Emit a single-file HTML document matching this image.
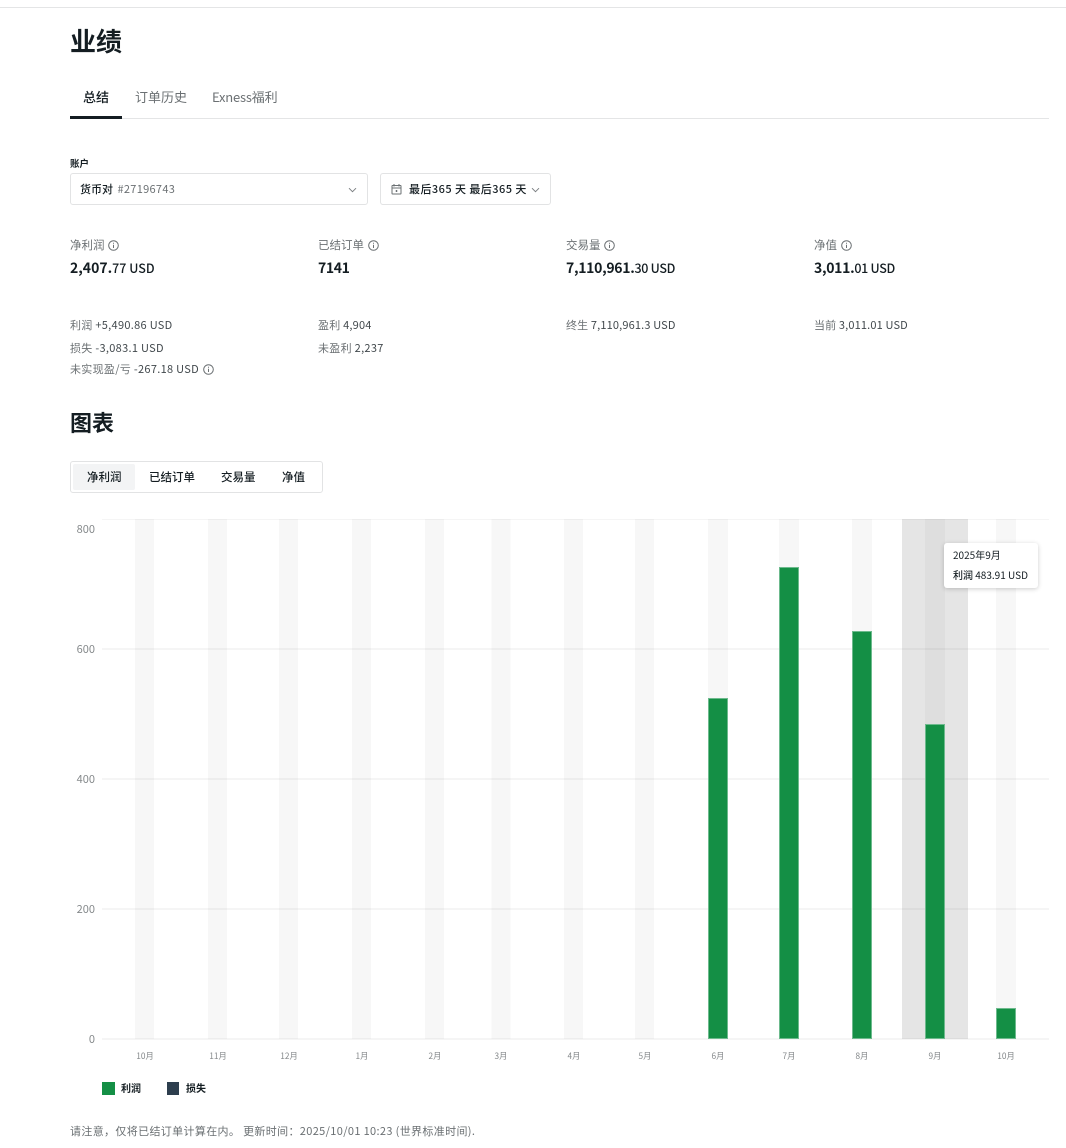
<!DOCTYPE html>
<html lang="zh"><head><meta charset="utf-8">
<style>
html,body{margin:0;padding:0;background:#fff}
body{width:1066px;height:1148px;position:relative;overflow:hidden;font-family:"Noto Sans CJK SC","Liberation Sans",sans-serif;color:#141d22}
.a{position:absolute;white-space:nowrap;line-height:1}
.g{color:#6b7073}
.box{position:absolute;border:1px solid #e2e3e4;border-radius:3px;box-sizing:border-box;background:#fff}
.s{font-size:11px;line-height:14px;letter-spacing:.3px;color:#42494d}
.l{font-size:11.5px;line-height:14px}
.v{font-size:14px;font-weight:600;line-height:18px}
.v span{font-size:12.5px;font-weight:500}
.t{font-size:11.500px;font-weight:500;line-height:14px}
svg{position:absolute;overflow:visible}
</style></head><body>
<div class="a" style="left:0;top:7px;width:1066px;height:1px;background:#e4e5e6"></div>
<div class="a" style="left:70px;top:27px;font-size:26px;font-weight:700;line-height:28px">业绩</div>
<div class="a" style="left:83px;top:89px;font-size:13px;font-weight:500;line-height:16px">总结</div>
<div class="a g" style="left:135px;top:89px;font-size:13px;line-height:16px">订单历史</div>
<div class="a g" style="left:212px;top:89px;font-size:13px;line-height:16px;letter-spacing:-.2px">Exness福利</div>
<div class="a" style="left:70px;top:118px;width:979px;height:1px;background:#e4e5e6"></div>
<div class="a" style="left:70px;top:116px;width:52px;height:3px;background:#141d22"></div>

<div class="a" style="left:70px;top:158px;font-size:9.500px;font-weight:700;line-height:11px">账户</div>
<div class="box" style="left:70px;top:173px;width:298px;height:32px"></div>
<div class="a" style="left:80px;top:182px;font-size:11px;font-weight:500;line-height:14px">货币对 <span class="g" style="font-weight:400;letter-spacing:.3px;margin-left:2px">#27196743</span></div>
<svg style="left:347px;top:186px" width="11" height="8" viewBox="0 0 11 8"><path d="M2 2.200 5.500 5.700 9 2.200" fill="none" stroke="#7b7f82" stroke-width="1"/></svg>
<div class="box" style="left:380px;top:173px;width:171px;height:32px"></div>
<svg style="left:391px;top:183px" width="11" height="12" viewBox="0 0 11 12"><path d="M1.500 2.500h8a.5.5 0 0 1 .5.5v7.500a.5.5 0 0 1-.5.5h-8a.5.5 0 0 1-.5-.5V3a.5.5 0 0 1 .5-.5zM1 5h9M3 1v2.500M8 1v2.500M4.500 8h2M5.500 7v2" fill="none" stroke="#6b7073" stroke-width="1"/></svg>
<div class="a" style="left:409px;top:182px;font-size:11px;font-weight:500;line-height:14px;letter-spacing:.45px">最后365 天 最后365 天</div>
<svg style="left:530px;top:186px" width="11" height="8" viewBox="0 0 11 8"><path d="M2 2.200 5.500 5.700 9 2.200" fill="none" stroke="#7b7f82" stroke-width="1"/></svg>

<div class="a g l" style="left:70px;top:238px">净利润</div>
<svg style="left:108px;top:240px" width="11" height="11" viewBox="0 0 11 11"><circle cx="5.500" cy="5.500" r="4.800" fill="none" stroke="#6b7073"/><path d="M5.500 4.800v3.200M5.500 2.800v1" stroke="#6b7073"/></svg>
<div class="a v" style="left:70px;top:259px">2,407.<span>77 USD</span></div>
<div class="a g l" style="left:318px;top:238px">已结订单</div>
<svg style="left:368px;top:240px" width="11" height="11" viewBox="0 0 11 11"><circle cx="5.500" cy="5.500" r="4.800" fill="none" stroke="#6b7073"/><path d="M5.500 4.800v3.200M5.500 2.800v1" stroke="#6b7073"/></svg>
<div class="a v" style="left:318px;top:259px;letter-spacing:-.4px">7141</div>
<div class="a g l" style="left:566px;top:238px">交易量</div>
<svg style="left:604px;top:240px" width="11" height="11" viewBox="0 0 11 11"><circle cx="5.500" cy="5.500" r="4.800" fill="none" stroke="#6b7073"/><path d="M5.500 4.800v3.200M5.500 2.800v1" stroke="#6b7073"/></svg>
<div class="a v" style="left:566px;top:259px;letter-spacing:-.3px">7,110,961.<span>30 USD</span></div>
<div class="a g l" style="left:814px;top:238px">净值</div>
<svg style="left:841px;top:240px" width="11" height="11" viewBox="0 0 11 11"><circle cx="5.500" cy="5.500" r="4.800" fill="none" stroke="#6b7073"/><path d="M5.500 4.800v3.200M5.500 2.800v1" stroke="#6b7073"/></svg>
<div class="a v" style="left:814px;top:259px;letter-spacing:-.3px">3,011.<span>01 USD</span></div>

<div class="a s" style="left:70px;top:318px"><span class="g">利润</span> +5,490.86 USD</div>
<div class="a s" style="left:70px;top:341px"><span class="g">损失</span> -3,083.1 USD</div>
<div class="a s" style="left:70px;top:362px"><span class="g">未实现盈/亏</span> -267.18 USD</div>
<svg style="left:203px;top:364px" width="11" height="11" viewBox="0 0 11 11"><circle cx="5.500" cy="5.500" r="4.800" fill="none" stroke="#6b7073"/><path d="M5.500 4.800v3.200M5.500 2.800v1" stroke="#6b7073"/></svg>
<div class="a s" style="left:318px;top:318px;letter-spacing:.2px"><span class="g">盈利</span> 4,904</div>
<div class="a s" style="left:318px;top:341px"><span class="g">未盈利</span> 2,237</div>
<div class="a s" style="left:566px;top:318px;letter-spacing:.15px"><span class="g">终生</span> 7,110,961.3 USD</div>
<div class="a s" style="left:814px;top:318px;letter-spacing:.15px"><span class="g">当前</span> 3,011.01 USD</div>

<div class="a" style="left:70px;top:408px;font-size:22px;font-weight:700;line-height:28px">图表</div>
<div class="box" style="left:70px;top:461px;width:253px;height:32px"></div>
<div class="a" style="left:73px;top:464px;width:62px;height:26px;background:#f3f4f5;border-radius:2px"></div>
<div class="a t" style="left:87px;top:470px">净利润</div>
<div class="a t" style="left:149px;top:470px">已结订单</div>
<div class="a t" style="left:221px;top:470px">交易量</div>
<div class="a t" style="left:282px;top:470px">净值</div>

<svg style="left:0;top:0" width="1066" height="1148" viewBox="0 0 1066 1148" font-family="'Noto Sans CJK SC','Liberation Sans',sans-serif">
<g fill="#f7f7f7">
<rect x="135" y="519" width="19" height="520"/><rect x="208" y="519" width="19" height="520"/><rect x="279" y="519" width="19" height="520"/><rect x="352" y="519" width="19" height="520"/><rect x="425" y="519" width="19" height="520"/><rect x="491.500" y="519" width="19" height="520"/><rect x="564" y="519" width="19" height="520"/><rect x="635" y="519" width="19" height="520"/><rect x="708" y="519" width="20" height="520"/><rect x="779" y="519" width="20" height="520"/><rect x="852" y="519" width="20" height="520"/><rect x="996" y="519" width="20" height="520"/>
</g>
<rect x="902" y="519" width="66" height="520" fill="#e5e5e5"/>
<rect x="925" y="519" width="20" height="205" fill="#dedede"/>
<g fill="#000" fill-opacity=".04">
<rect x="102" y="519" width="947" height="1"/><rect x="102" y="648" width="947" height="2"/><rect x="102" y="778" width="947" height="2"/><rect x="102" y="908" width="947" height="2"/><rect x="102" y="1038" width="947" height="2"/>
</g>
<g fill="#148f45" stroke="#6dba8d" stroke-width="1">
<rect x="708.500" y="698.500" width="19" height="340"/><rect x="779.500" y="567.500" width="19" height="471"/><rect x="852.500" y="631.500" width="19" height="407"/><rect x="925.500" y="724.500" width="19" height="314"/><rect x="996.500" y="1008.500" width="19" height="30"/>
</g>
<g fill="#85898b" font-size="11" text-anchor="end">
<text x="95" y="533">800</text><text x="95" y="653">600</text><text x="95" y="783">400</text><text x="95" y="913">200</text><text x="95" y="1043">0</text>
</g>
<g fill="#85898b" font-size="8.300" text-anchor="middle">
<text x="145" y="1059">10月</text><text x="218" y="1059">11月</text><text x="289" y="1059">12月</text><text x="362" y="1059">1月</text><text x="435" y="1059">2月</text><text x="501" y="1059">3月</text><text x="574" y="1059">4月</text><text x="645" y="1059">5月</text><text x="718" y="1059">6月</text><text x="789" y="1059">7月</text><text x="862" y="1059">8月</text><text x="935" y="1059">9月</text><text x="1006" y="1059">10月</text>
</g>
</svg>

<div class="a" style="left:944px;top:543px;width:94px;height:45px;background:#fff;border-radius:3px;box-shadow:0 1px 5px rgba(0,0,0,.2)"></div>
<div class="a" style="left:953px;top:549px;font-size:10px;line-height:12px">2025年9月</div>
<div class="a" style="left:953px;top:569px;font-size:10px;line-height:12px"><span style="font-weight:500">利润</span> 483.91 USD</div>

<div class="a" style="left:102px;top:1082px;width:13px;height:13px;background:#148f45"></div>
<div class="a" style="left:121px;top:1082px;font-size:10px;font-weight:700;line-height:12px">利润</div>
<div class="a" style="left:167px;top:1082px;width:12px;height:13px;background:#2d3e4e"></div>
<div class="a" style="left:186px;top:1082px;font-size:10px;font-weight:700;line-height:12px">损失</div>
<div class="a g" style="left:70px;top:1124px;font-size:11px;line-height:14px;letter-spacing:.35px">请注意，仅将已结订单计算在内。 更新时间：2025/10/01 10:23 (世界标准时间).</div>
</body></html>
